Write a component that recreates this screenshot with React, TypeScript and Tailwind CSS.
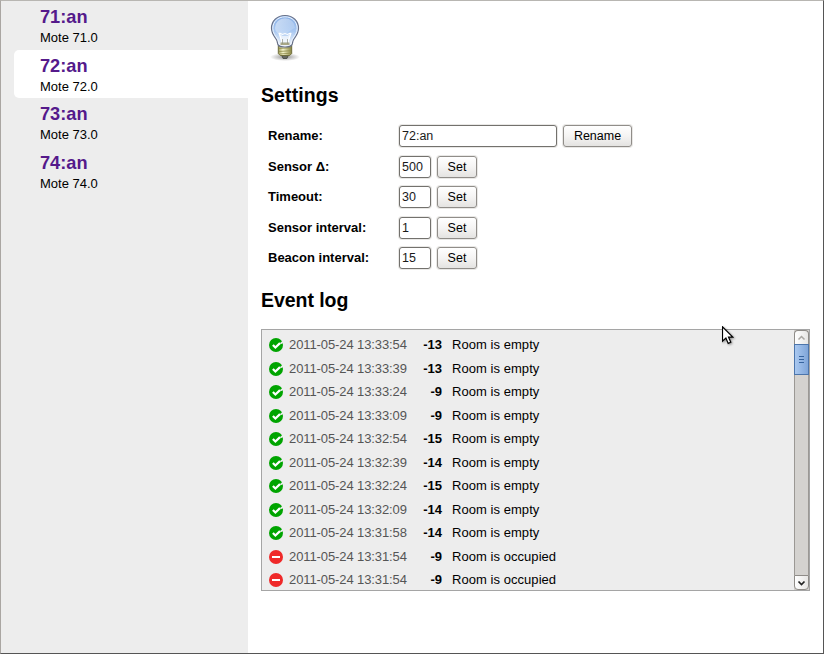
import React from "react";

const motes = [
  { name: "71:an", label: "Mote 71.0", box: "h-[49px]" },
  { name: "72:an", label: "Mote 72.0", box: "h-12 rounded-l-[5px] bg-white" },
  { name: "73:an", label: "Mote 73.0", box: "h-[49px]" },
  { name: "74:an", label: "Mote 74.0", box: "h-12" },
];

const settings = [
  { label: "Rename:", value: "72:an", action: "Rename", row: "h-[31px]", wide: true },
  { label: "Sensor Δ:", value: "500", action: "Set", row: "h-[30px]" },
  { label: "Timeout:", value: "30", action: "Set", row: "h-[31px]" },
  { label: "Sensor interval:", value: "1", action: "Set", row: "h-[30px]" },
  { label: "Beacon interval:", value: "15", action: "Set", row: "h-[30px]" },
];

const events = [
  { time: "13:33:54", level: "-13" },
  { time: "13:33:39", level: "-13" },
  { time: "13:33:24", level: "-9" },
  { time: "13:33:09", level: "-9" },
  { time: "13:32:54", level: "-15" },
  { time: "13:32:39", level: "-14" },
  { time: "13:32:24", level: "-15" },
  { time: "13:32:09", level: "-14" },
  { time: "13:31:58", level: "-14" },
  { time: "13:31:54", level: "-9", occupied: true },
  { time: "13:31:54", level: "-9", occupied: true },
];

function Bulb() {
  return (
    <svg className="block" width="48" height="48" viewBox="0 0 48 48">
      <defs>
        <radialGradient id="shade">
          <stop offset="0" stopColor="#000" stopOpacity=".42" />
          <stop offset="1" stopColor="#000" stopOpacity="0" />
        </radialGradient>
        <linearGradient id="glass" x1="0" y1="0" x2="0" y2="1">
          <stop offset="0" stopColor="#86aee6" />
          <stop offset=".5" stopColor="#a9c8f1" />
          <stop offset="1" stopColor="#f8fafd" />
        </linearGradient>
        <linearGradient id="gloss" x1="0" y1="0" x2="1" y2="1">
          <stop offset="0" stopColor="#fff" stopOpacity=".55" />
          <stop offset="1" stopColor="#fff" stopOpacity=".05" />
        </linearGradient>
        <linearGradient id="brass" x1="0" y1="0" x2="1" y2="0">
          <stop offset="0" stopColor="#9c9a55" />
          <stop offset=".35" stopColor="#f6f5cc" />
          <stop offset="1" stopColor="#85823f" />
        </linearGradient>
      </defs>
      <ellipse cx="24" cy="43" rx="15" ry="4" fill="url(#shade)" />
      <path d="M20.5 41h7l-1.6 3.500h-3.8z" fill="#66685f" stroke="#3f413c" strokeWidth=".8" />
      <path d="M17.3 31.5h13.4v8l-2 2h-9.4l-2-2z" fill="url(#brass)" stroke="#6f6d3c" strokeWidth="1" />
      <path d="M18 34.500l12-.8M18 37.500l12-.8M18.500 40l11-.8" stroke="#908d4b" strokeWidth=".8" />
      <path d="M24 1.5C16 1.5 10.5 7 10.5 14.3c0 5.5 3 8.1 5 11.5 1.2 2 .8 4.2 1.7 5.2 1.2 1.4 3.8 2 6.8 2s5.6-.6 6.8-2c.9-1 .5-3.2 1.7-5.2 2-3.4 5-6 5-11.5C37.5 7 32 1.5 24 1.5z" fill="url(#glass)" stroke="#687087" strokeWidth="1.200" />
      <path d="M24 2.8C16.800 2.800 11.800 7.800 11.800 14.300c0 5 2.700 7.400 4.800 10.900 1.100 1.900.9 4 1.600 4.800 1 1 3 1.600 5.800 1.600s4.800-.6 5.800-1.600c.7-.8.5-2.900 1.600-4.800 2.100-3.500 4.800-5.900 4.800-10.900C36.200 7.800 31.200 2.800 24 2.800z" fill="none" stroke="#edf4fd" strokeWidth="1" />
      <path d="M14 14a10 9.800 0 0 1 20 0c-5 1.600-7 6.300-15 6.700-3-1.700-5-3.700-5-6.700z" fill="url(#gloss)" />
      <path d="M17.500 18.500l4 3.500h5l4-3.500-3 9.500h-7z" fill="#fff" fillOpacity=".6" />
      <path d="M18 19l3 9M30 19l-3 9M18.500 19l3 1.500 2.500-1 2.500 1 3-1.500" fill="none" stroke="#fff" strokeWidth="1.100" />
      <path d="M19.500 28.500h9v2.500h-9z" fill="#a9a887" />
      <path d="M21.500 25v5M26.500 25v5" stroke="#8c8f82" strokeWidth=".7" />
    </svg>
  );
}

function StatusIcon({ occupied }: { occupied?: boolean }) {
  return (
    <svg className="block shrink-0" width="14" height="14" viewBox="0 0 14 14">
      <circle cx="7" cy="7" r="7" fill={occupied ? "#ef2929" : "#00a400"} />
      {occupied ? (
        <path d="M3 7h8" stroke="#fff" strokeWidth="2" />
      ) : (
        <>
          <path d="M14 2.600L10.500 5.600 12.500 6 14 5z" fill="#ededed" />
          <path d="M3.900 6.900l2.500 2.600 4.600-4.400" fill="none" stroke="#fff" strokeWidth="2.200" />
        </>
      )}
    </svg>
  );
}

export default function App() {
  return (
    <div className="relative flex h-[654px] w-[824px] overflow-hidden border border-t-[#b8b6b2] border-r-[#555] border-b-[#555] border-l-[#aaa6a2] bg-white font-['Liberation_Sans',Arial,sans-serif] text-[13px] leading-4 text-black">
      <nav className="w-[247px] shrink-0 bg-[#ededed] pl-[13px]">
        {motes.map((mote) => (
          <div key={mote.name} className={`${mote.box} pt-[5px] pl-[26px]`}>
            <div className="text-[18.200px] leading-[22px] font-bold text-[#551a8b]">{mote.name}</div>
            <div className="leading-[19px]">{mote.label}</div>
          </div>
        ))}
      </nav>

      <main className="w-[562px] pt-[13px] pl-[13px]">
        <Bulb />
        <h2 className="mt-[21px] text-[19.500px] leading-6 font-bold tracking-[0.1px]">Settings</h2>
        <div className="mt-[18px] pl-[7px]">
          {settings.map((item) => (
            <div key={item.label} className={`flex items-start leading-[22px] ${item.row}`}>
              <label className="w-[131px] font-bold">{item.label}</label>
              <input
                className={`h-[22px] rounded-[3px] border border-[#73716d] bg-white px-[2px] text-[12.500px] text-[#1a1a1a] shadow-[0_0_0_1px_#e9e8e6] outline-none ${item.wide ? "w-[158px]" : "w-8"}`}
                defaultValue={item.value}
              />
              <button
                className={`ml-[6px] h-[22px] rounded-[3px] border border-[#908d89] bg-linear-to-b from-white via-[#f5f4f3] to-[#e4e3e1] text-[12.500px] leading-5 shadow-[0_0_0_1px_#e9e8e6] ${item.wide ? "w-[69px]" : "w-10"}`}
              >
                {item.action}
              </button>
            </div>
          ))}
        </div>
        <h2 className="mt-[11px] text-[19.500px] leading-6 font-bold tracking-[-0.05px]">Event log</h2>
        <section className="mt-[17px] flex h-[262px] w-[549px] overflow-hidden border border-[#a5a5a5] bg-[#ededed]">
          <div className="flex-1 pt-[3.4px] pl-[7px]">
            {events.map((event, i) => (
              <div key={i} className="flex h-[23.500px] items-center">
                <StatusIcon occupied={event.occupied} />
                <time className="ml-[6px] w-[119px] tracking-[-0.1px] whitespace-nowrap text-[#555]">2011-05-24 {event.time}</time>
                <b className="w-[34px] text-right">{event.level}</b>
                <span className="ml-[10px] tracking-[0.050px]">Room is {event.occupied ? "occupied" : "empty"}</span>
              </div>
            ))}
          </div>
          <div className="flex w-[15px] flex-col bg-[#d4d2cf]">
            <div className="flex h-[14px] items-center justify-center rounded-t-[4px] border border-b-0 border-[#8f8c88] bg-linear-to-r from-white to-[#e7e6e4]">
              <svg width="9" height="6" viewBox="0 0 9 6"><path d="M1.500 4.500l3-3 3 3" fill="none" stroke="#aaa7a3" strokeWidth="1.500" /></svg>
            </div>
            <div className="flex h-[31px] flex-col items-center justify-center gap-[2px] border border-[#4c75ab] bg-linear-to-r from-[#a9c8f0] to-[#80a6d9]">
              <i className="h-px w-[5px] bg-[#35639e]" />
              <i className="h-px w-[5px] bg-[#35639e]" />
              <i className="h-px w-[5px] bg-[#35639e]" />
            </div>
            <div className="flex-1 border-x border-[#9b9894]" />
            <div className="flex h-[15px] items-center justify-center rounded-b-[4px] border border-[#8f8c88] bg-linear-to-r from-white to-[#e7e6e4]">
              <svg width="9" height="6" viewBox="0 0 9 6"><path d="M1.500 1.500l3 3 3-3" fill="none" stroke="#222" strokeWidth="1.700" /></svg>
            </div>
          </div>
        </section>
      </main>

      <svg className="absolute top-[325px] left-[721px] drop-shadow-[1px_1px_1px_rgba(0,0,0,0.4)]" width="12" height="19" viewBox="0 0 12 19">
        <path d="M.5 .8v14.400l3.400-3.200 2.300 5.400 2.600-1.100-2.300-5.200h4.300z" fill="#fff" stroke="#000" strokeWidth="1.200" />
      </svg>
    </div>
  );
}
